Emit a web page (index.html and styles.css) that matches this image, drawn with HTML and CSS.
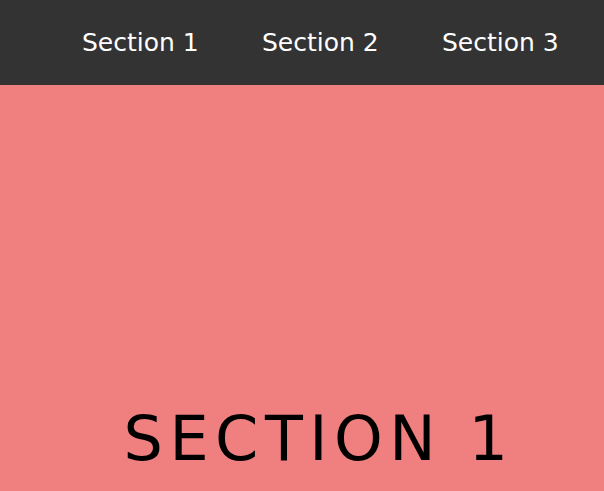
FILE: index.html
```html
<!DOCTYPE html>
<html>
<head>
<meta charset="utf-8">
<link rel="stylesheet" href="styles.css">
</head>
<body>
<nav class="nav">
  <a class="nav-link" href="#s1">Section 1</a>
  <a class="nav-link" href="#s2">Section 2</a>
  <a class="nav-link" href="#s3">Section 3</a>
</nav>
<section class="section" id="s1">
  <h1 class="section-title">SECTION 1</h1>
</section>
</body>
</html>
```
FILE: styles.css
```css
html, body {
  margin: 0;
  padding: 0;
  height: 100%;
  overflow: hidden;
}
body {
  font-family: "DejaVu Sans", Verdana, sans-serif;
  background: #f08080;
}
.nav {
  height: 85px;
  background: #333333;
  display: flex;
  align-items: center;
  padding-left: 82px;
  gap: 64px;
  box-sizing: border-box;
}
.nav-link {
  color: #ffffff;
  text-decoration: none;
  font-size: 25px;
  line-height: 1;
  width: 116px;
  white-space: nowrap;
}
.section {
  height: 406px;
  background: #f08080;
  display: flex;
  justify-content: center;
  padding-top: 323px;
  padding-left: 34px;
  box-sizing: border-box;
}
.section-title {
  margin: 0;
  font-weight: normal;
  font-size: 62px;
  letter-spacing: 6.5px;
  line-height: 1;
  color: #000;
  height: 80px;
}
```
